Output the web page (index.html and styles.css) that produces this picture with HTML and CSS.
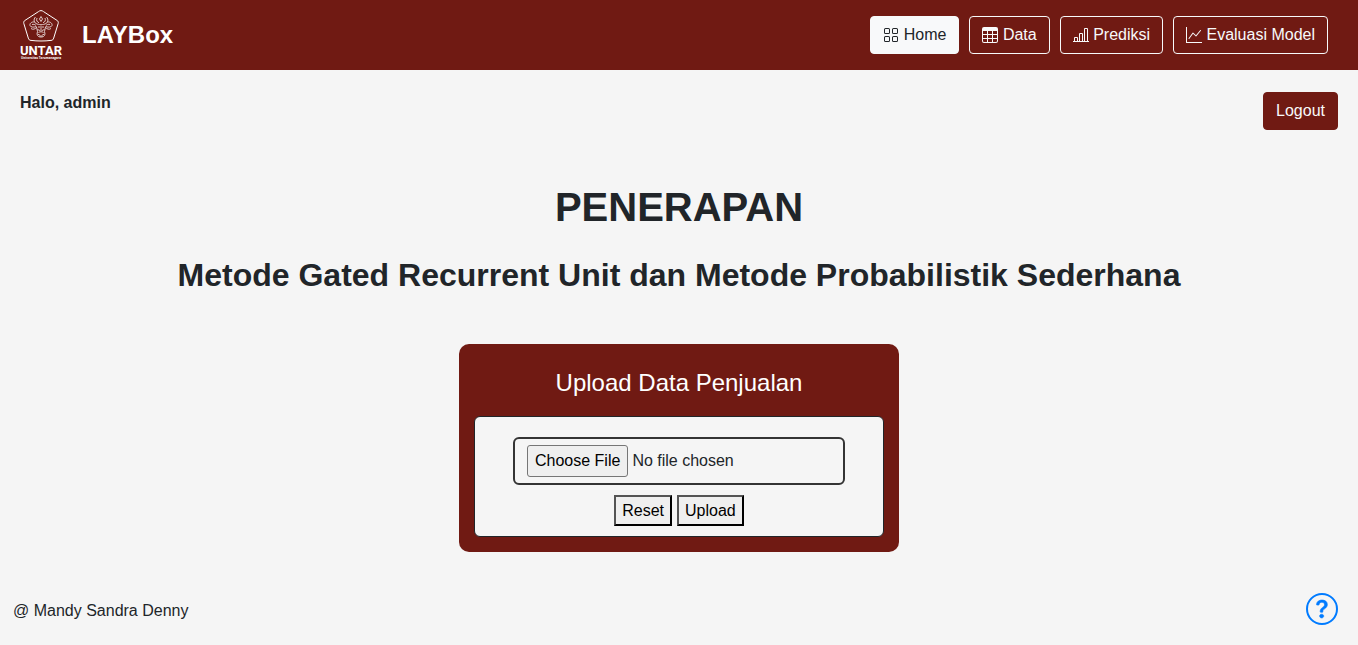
FILE: index.html
```html
<!DOCTYPE html>
<html lang="id">
<head>
<meta charset="utf-8">
<meta name="viewport" content="width=device-width, initial-scale=1">
<title>LAYBox</title>
<link rel="stylesheet" href="styles.css">
</head>
<body>
<header class="navbar">
  <div class="brand">
    <svg class="logo" viewBox="0 0 42 50" role="img" aria-label="UNTAR">
      <path class="logo-line" d="M21 .6c1 0 1.700.4 2.500 1L37 10.400c1.300.9 1.500 1.700 1.200 3l-4.500 14.700c-.5 1.600-1.200 2.200-2.700 2.300-6.500.8-13.500.8-20 0-1.500-.1-2.200-.7-2.700-2.300L3.800 13.400c-.3-1.300-.1-2.100 1.200-3L18.500 1.600c.8-.6 1.500-1 2.500-1z"/>
      <g class="logo-detail">
        <path d="M15.500 7c-2.500 2.500-1.500 6 1.500 7 2 .7 3 .5 4 .5s2 .2 4-.5c3-1 4-4.500 1.500-7"/>
        <path d="M17 8c-1 2.500 0 4 2 4.700M25 8c1 2.500 0 4-2 4.700M21 6.500l-1.500 2.500 1.500 2.500 1.500-2.500z"/>
        <path d="M14.500 12c-3-.5-5 1.500-4.500 3.500.5 1.800 3.500 2 6.500 1M27.500 12c3-.5 5 1.500 4.500 3.500-.5 1.800-3.500 2-6.500 1"/>
        <path d="M12 14.500c1.500-.5 3 0 4 1M30 14.500c-1.500-.5-3 0-4 1M11 18.500c2 1.500 4 .5 5.500-1M31 18.500c-2 1.500-4 .5-5.500-1"/>
        <path d="M16.500 17l1 4.500L17 24c.5 2.500 2 3 4 3s3.500-.5 4-3l-.5-2.500 1-4.500M17.500 19.500l2.500 1M24.500 19.500l-2.500 1"/>
        <path d="M18.500 22.500c1.500-1 3.500-1 5 0M18 24.500h1.500M22.500 24.500H24M19 26h4M21 15.500V21M19 16v2M23 16v2"/>
      </g>
      <text class="logo-name" x="21" y="45" text-anchor="middle">UNTAR</text>
      <text class="logo-sub" x="21" y="49" text-anchor="middle">Universitas Tarumanagara</text>
    </svg>
    <span class="brand-name">LAYBox</span>
  </div>
  <nav class="nav">
    <a class="btn btn-active" href="#home" aria-current="page"><svg class="icon" viewBox="0 0 16 16"><path d="M1 2.500A1.500 1.500 0 0 1 2.500 1h3A1.500 1.500 0 0 1 7 2.500v3A1.500 1.500 0 0 1 5.500 7h-3A1.500 1.500 0 0 1 1 5.500zM2.500 2a.5.5 0 0 0-.5.5v3a.5.5 0 0 0 .5.5h3a.5.5 0 0 0 .5-.5v-3a.5.5 0 0 0-.5-.5zm6.500.5A1.500 1.500 0 0 1 10.500 1h3A1.500 1.500 0 0 1 15 2.500v3A1.500 1.500 0 0 1 13.500 7h-3A1.500 1.500 0 0 1 9 5.500zm1.500-.5a.5.5 0 0 0-.5.5v3a.5.5 0 0 0 .5.5h3a.5.5 0 0 0 .5-.5v-3a.5.5 0 0 0-.5-.5zM1 10.500A1.500 1.500 0 0 1 2.500 9h3A1.500 1.500 0 0 1 7 10.500v3A1.500 1.500 0 0 1 5.500 15h-3A1.500 1.500 0 0 1 1 13.500zm1.500-.5a.5.5 0 0 0-.5.5v3a.5.5 0 0 0 .5.5h3a.5.5 0 0 0 .5-.5v-3a.5.5 0 0 0-.5-.5zm6.500.5A1.500 1.500 0 0 1 10.500 9h3a1.500 1.500 0 0 1 1.500 1.500v3a1.500 1.500 0 0 1-1.500 1.500h-3A1.500 1.500 0 0 1 9 13.500zm1.500-.5a.5.5 0 0 0-.5.5v3a.5.5 0 0 0 .5.5h3a.5.5 0 0 0 .5-.5v-3a.5.5 0 0 0-.5-.5z"/></svg> Home</a>
    <a class="btn" href="#data"><svg class="icon" viewBox="0 0 16 16"><path d="M0 2a2 2 0 0 1 2-2h12a2 2 0 0 1 2 2v12a2 2 0 0 1-2 2H2a2 2 0 0 1-2-2zm15 2h-4v3h4zm0 4h-4v3h4zm0 4h-4v3h3a1 1 0 0 0 1-1zm-5 3v-3H6v3zm-5 0v-3H1v2a1 1 0 0 0 1 1zm-4-4h4V8H1zm0-4h4V4H1zm5-3v3h4V4zm4 4H6v3h4z"/></svg> Data</a>
    <a class="btn" href="#prediksi"><svg class="icon" viewBox="0 0 16 16"><path d="M4 11H2v3h2zm5-4H7v7h2zm5-5v12h-2V2zm-2-1a1 1 0 0 0-1 1v12a1 1 0 0 0 1 1h2a1 1 0 0 0 1-1V2a1 1 0 0 0-1-1zM6 7a1 1 0 0 1 1-1h2a1 1 0 0 1 1 1v7a1 1 0 0 1-1 1H7a1 1 0 0 1-1-1zm-5 4a1 1 0 0 1 1-1h2a1 1 0 0 1 1 1v3a1 1 0 0 1-1 1H2a1 1 0 0 1-1-1z"/><path d="M0 14h16v1H0z"/></svg> Prediksi</a>
    <a class="btn" href="#evaluasi"><svg class="icon" viewBox="0 0 16 16"><path fill-rule="evenodd" d="M0 0h1v15h15v1H0zm14.817 3.113a.5.5 0 0 1 .07.704l-4.500 5.500a.5.5 0 0 1-.74.037L7.060 6.767l-3.656 5.027a.5.5 0 0 1-.808-.588l4-5.500a.5.5 0 0 1 .758-.06l2.609 2.610 4.150-5.073a.5.5 0 0 1 .704-.07"/></svg> Evaluasi Model</a>
  </nav>
</header>

<div class="userbar">
  <strong>Halo, admin</strong>
  <button class="btn btn-logout" type="button">Logout</button>
</div>

<main class="main">
  <h1 class="title">PENERAPAN</h1>
  <h2 class="subtitle">Metode Gated Recurrent Unit dan Metode Probabilistik Sederhana</h2>
  <section class="card">
    <h3 class="card-title" id="upload-title">Upload Data Penjualan</h3>
    <form class="upload">
      <input class="file" type="file" aria-labelledby="upload-title">
      <div class="actions">
        <button class="plain" type="reset">Reset</button>
        <button class="plain" type="submit">Upload</button>
      </div>
    </form>
  </section>
</main>

<footer class="footer">
  <span class="credit">@ Mandy Sandra Denny</span>
  <a class="help" href="#help" aria-label="Help"><svg class="help-icon" viewBox="0 0 16 16"><path d="M8 15A7 7 0 1 1 8 1a7 7 0 0 1 0 14m0 1A8 8 0 1 0 8 0a8 8 0 0 0 0 16"/><path class="help-mark" d="M5.255 5.786a.237.237 0 0 0 .241.247h.825c.138 0 .248-.113.266-.250.090-.656.540-1.134 1.342-1.134.686 0 1.314.343 1.314 1.168 0 .635-.374.927-.965 1.371-.673.489-1.206 1.060-1.168 1.987l.003.217a.25.25 0 0 0 .250.246h.811a.25.25 0 0 0 .250-.250v-.105c0-.718.273-.927 1.010-1.486.609-.463 1.244-.977 1.244-2.056 0-1.511-1.276-2.241-2.673-2.241-1.267 0-2.655.590-2.750 2.286m1.557 5.763c0 .533.425.927 1.010.927.609 0 1.028-.394 1.028-.927 0-.552-.420-.940-1.029-.940-.584 0-1.009.388-1.009.940"/></svg></a>
</footer>
</body>
</html>
```
FILE: styles.css
```css
* {
  box-sizing: border-box;
}

body {
  display: flex;
  flex-direction: column;
  min-height: 100vh;
  margin: 0;
  background: #f5f5f5;
  color: #212529;
  font: 16px/24px "Liberation Sans", Arial, sans-serif;
}

.navbar {
  display: flex;
  align-items: center;
  justify-content: space-between;
  padding: 10px 30px 10px 20px;
  background: #701a13;
  color: #fff;
}

.brand {
  display: flex;
  align-items: center;
  gap: 20px;
}

.logo {
  width: 42px;
  height: 50px;
  fill: #fff;
  overflow: visible;
}

.logo-line,
.logo-detail {
  fill: none;
  stroke: #fff;
}

.logo-detail {
  stroke-width: 0.9;
  opacity: 0.85;
}

.logo-name {
  font: bold 13px Roboto, sans-serif;
}

.logo-sub {
  font: bold 3px "Open Sans", sans-serif;
}

.brand-name {
  font-size: 24px;
  font-weight: bold;
}

.nav {
  display: flex;
  gap: 10px;
}

.btn {
  padding: 6px 12px;
  border: 1px solid #f8f9fa;
  border-radius: 4px;
  background: transparent;
  color: #f8f9fa;
  font: inherit;
  text-decoration: none;
}

.btn-active {
  background: #f8f9fa;
  color: #212529;
}

.btn-logout {
  border-color: #701a13;
  background: #701a13;
}

.icon {
  width: 16px;
  height: 16px;
  fill: currentColor;
  vertical-align: -3px;
}

.userbar {
  display: flex;
  align-items: flex-start;
  justify-content: space-between;
  padding: 22px 20px 0;
}

.userbar strong {
  line-height: 22px;
}

.main {
  display: flex;
  flex-direction: column;
  align-items: center;
  padding: 53px 20px 0;
  text-align: center;
}

.title {
  margin: 0 0 24px;
  font-size: 40px;
  line-height: 48px;
}

.subtitle {
  margin: 0 0 49px;
  font-size: 32px;
  line-height: 40px;
}

.card {
  width: 100%;
  max-width: 440px;
  padding: 15px;
  border-radius: 10px;
  background: #701a13;
}

.card-title {
  margin: 8px 0 18px;
  color: #fff;
  font-size: 24px;
  font-weight: normal;
  line-height: 31px;
}

.upload {
  display: flex;
  flex-direction: column;
  align-items: center;
  gap: 10px;
  padding: 20px 10px 10px;
  border: 1px solid #212529;
  border-radius: 6px;
  background: #f5f5f5;
}

.file {
  width: 100%;
  max-width: 332px;
  padding: 6px 12px;
  border: 2px solid #343434;
  border-radius: 6px;
  color: #212529;
  font: inherit;
}

.file::file-selector-button {
  padding: 3px 7px;
  border: 1px solid #767676;
  border-radius: 3px;
  background: #efefef;
  color: #000;
  font: inherit;
}

.actions {
  display: flex;
  gap: 5px;
}

.plain {
  padding: 1px 6px;
  border: 2px outset #000;
  background: #efefef;
  color: #000;
  font: inherit;
  line-height: 25px;
}

.footer {
  display: flex;
  align-items: center;
  justify-content: space-between;
  margin-top: auto;
  padding: 20px 20px 20px 13px;
}

.credit {
  padding-top: 4px;
}

.help {
  display: flex;
}

.help-icon {
  width: 32px;
  height: 32px;
  fill: #007bff;
}

.help-mark {
  stroke: #007bff;
  stroke-width: 0.3;
}
```
